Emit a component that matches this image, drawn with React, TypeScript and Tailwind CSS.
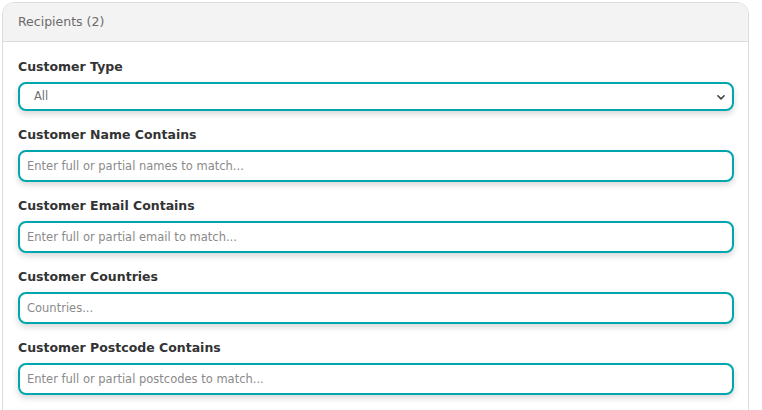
const FIELDS = [
  { label: "Customer Name Contains", placeholder: "Enter full or partial names to match..." },
  { label: "Customer Email Contains", placeholder: "Enter full or partial email to match..." },
  { label: "Customer Countries", placeholder: "Countries..." },
  { label: "Customer Postcode Contains", placeholder: "Enter full or partial postcodes to match..." },
];

const font = { fontFamily: '"DejaVu Sans", "Open Sans", sans-serif' };

export default function App() {
  return (
    <div className="w-[762px] h-[410px] overflow-hidden bg-white pt-[2px] pl-[2px]" style={font}>
      <div className="w-[747px] h-[420px] rounded-t-[12px] border border-[#dcdcdc] bg-white overflow-hidden">
        <div className="h-[39px] bg-[#f3f3f3] border-b border-[#dcdcdc] flex items-center pl-[15px]">
          <span className="text-[12.5px] text-[#6b6b6b]">Recipients (2)</span>
        </div>
        <div className="pl-[15px] pr-[14px] pt-[17px]">
          <label className="block text-[12.5px] font-bold text-[#333] leading-[16px] mb-[7px]">Customer Type</label>
          <div className="relative h-[29px] rounded-[8px] border-2 border-[#00a5ad] shadow-[0_3px_6px_rgba(0,0,0,0.16)] flex items-center pl-[14px]">
            <span className="text-[11.5px] text-[#707070]">All</span>
            <svg className="absolute right-[6px] top-1/2 -translate-y-1/2" width="10" height="10" viewBox="0 0 16 16">
              <path d="M3 6l5 5 5-5" fill="none" stroke="#444" strokeWidth="2.6" strokeLinecap="round" strokeLinejoin="round" />
            </svg>
          </div>
          {FIELDS.map((f) => (
            <div key={f.label} className="mt-[16px]">
              <label className="block text-[12.5px] font-bold text-[#333] leading-[16px] mb-[7px]">{f.label}</label>
              <input
                className="block w-full h-[32px] rounded-[8px] border-2 border-[#00a5ad] shadow-[0_3px_6px_rgba(0,0,0,0.16)] px-[7px] text-[11.5px] text-[#555] placeholder:text-[#8a8a8a] outline-none"
                style={font}
                placeholder={f.placeholder}
              />
            </div>
          ))}
        </div>
      </div>
    </div>
  );
}
